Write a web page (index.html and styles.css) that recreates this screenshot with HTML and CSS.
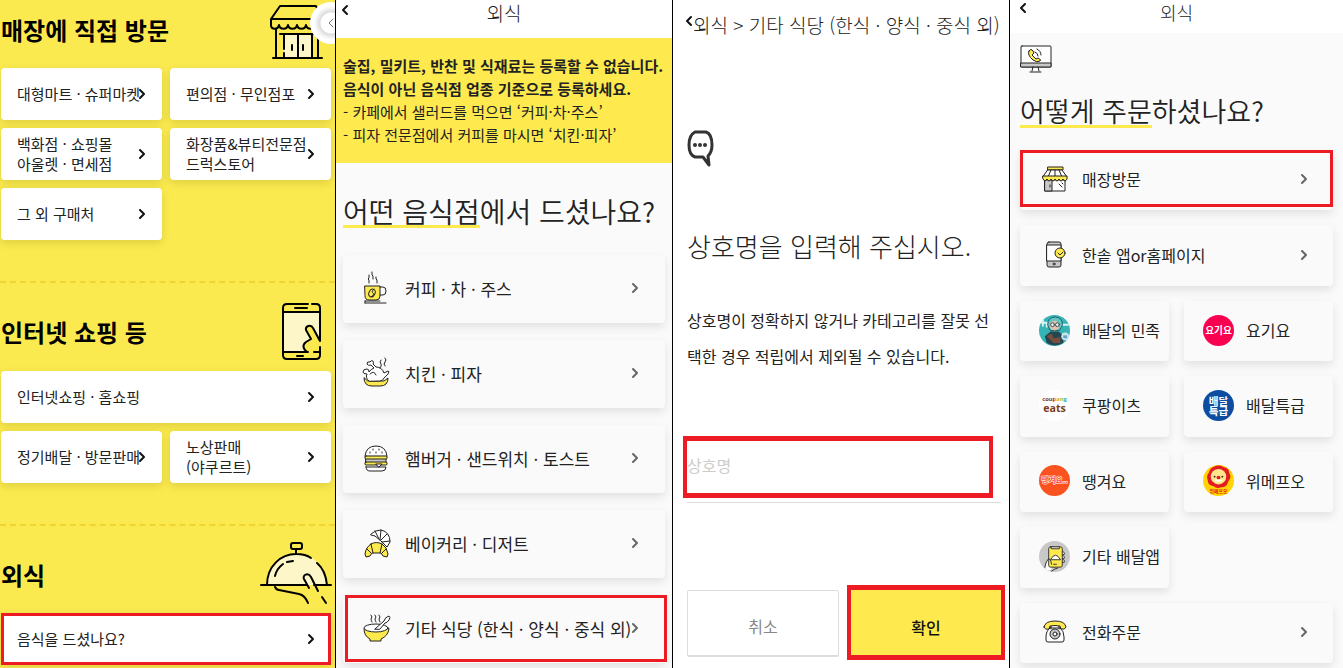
FILE: index.html
```html
<!DOCTYPE html>
<html lang="ko">
<head>
  <meta charset="UTF-8">
  <meta name="viewport" content="width=device-width, initial-scale=1.0">
  <title>외식 등록 안내</title>
  <link rel="stylesheet" href="styles.css">
</head>
<body>
  <svg class="defs" aria-hidden="true">
    <symbol id="next" viewBox="0 0 8 12"><path d="M2 2l4 4-4 4" /></symbol>
    <symbol id="prev" viewBox="0 0 8 12"><path d="M6 2L2 6l4 4" /></symbol>
    <linearGradient id="rainbow">
      <stop offset="45%" stop-color="#7b3f20" />
      <stop offset="46%" stop-color="#e33b2e" />
      <stop offset="60%" stop-color="#f3a61c" />
      <stop offset="78%" stop-color="#8cc63f" />
      <stop offset="90%" stop-color="#27a9e1" />
    </linearGradient>
  </svg>
  <main class="screens">

    <!-- 1. category -->
    <section class="screen category">
      <div class="group">
        <div class="group-head">
          <h2>매장에 직접 방문</h2>
          <svg class="group-icon" viewBox="0 0 70 60">
            <path class="cream" d="M23 34h28v24H23z" />
            <path d="M10 19L19 6h36l5 13M10 19h50M10 19v6c0 5 7 5 8 0 1 5 8 5 9 0 1 5 8 5 9 0 1 5 8 5 9 0 1 5 8 5 9 0M15 30v28M57 30v28M12 58h49M19 34h36M23 34v15M23 53v5M37 34v24M51 34v24M31 45v5M42 45v5" />
          </svg>
        </div>
        <div class="tiles">
          <a href="#" class="tile"><span>대형마트 · 슈퍼마켓</span><svg class="arrow"><use href="#next" /></svg></a>
          <a href="#" class="tile"><span>편의점 · 무인점포</span><svg class="arrow"><use href="#next" /></svg></a>
          <a href="#" class="tile"><span>백화점 · 쇼핑몰<br>아울렛 · 면세점</span><svg class="arrow"><use href="#next" /></svg></a>
          <a href="#" class="tile"><span>화장품&amp;뷰티전문점<br>드럭스토어</span><svg class="arrow"><use href="#next" /></svg></a>
          <a href="#" class="tile"><span>그 외 구매처</span><svg class="arrow"><use href="#next" /></svg></a>
        </div>
      </div>
      <div class="group">
        <div class="group-head">
          <h2>인터넷 쇼핑 등</h2>
          <svg class="group-icon" viewBox="0 0 70 60">
            <path class="cream" d="M22 10h37v29l-7-13c-2-4-8-2-7 2l5 9c-6 2-9 8-4 13H22z" />
            <path d="M47 2H26q-4 0-4 4v47q0 4 4 4h29q4 0 4-4v-8M51 2h4q4 0 4 4v33l-7-13c-2-4-8-2-7 2l5 9-5 3c-4 3-3 7 1 10M22 10h37M22 50h25M53 50h6M34 6h12M36 54h6" />
          </svg>
        </div>
        <div class="tiles">
          <a href="#" class="tile wide"><span>인터넷쇼핑 · 홈쇼핑</span><svg class="arrow"><use href="#next" /></svg></a>
          <a href="#" class="tile"><span>정기배달 · 방문판매</span><svg class="arrow"><use href="#next" /></svg></a>
          <a href="#" class="tile"><span>노상판매<br>(야쿠르트)</span><svg class="arrow"><use href="#next" /></svg></a>
        </div>
      </div>
      <div class="group">
        <div class="group-head">
          <h2>외식</h2>
          <svg class="group-icon" viewBox="0 0 70 60">
            <path class="cream" d="M6 40a30 31 0 0 1 60 0z" />
            <path d="M6 40c0-19 14-31 29-31 6 0 11 1 15 4M56 18c6 5 9 12 10 22M0 40h45M53 40h17M35 4v5M14 31c1-5 4-9 8-12M26 17l6-1M14 42c1 2 2 3 4 3l20 4c5 1 7 4 9 9M48 43l-5-9c-2-4 4-7 7-2l7 14M61 52l4 6" />
            <rect x="30" y="-2" width="11" height="6" rx="2" />
          </svg>
        </div>
        <div class="tiles">
          <a href="#" class="tile wide marked"><span>음식을 드셨나요?</span><svg class="arrow"><use href="#next" /></svg></a>
        </div>
      </div>
      <button class="drawer" aria-label="메뉴 열기"><svg class="arrow"><use href="#prev" /></svg></button>
    </section>

    <!-- 2. restaurant type -->
    <section class="screen restaurant">
      <header class="bar">
        <button class="back" aria-label="뒤로"><svg class="arrow"><use href="#prev" /></svg></button>
        <h1>외식</h1>
      </header>
      <div class="notice">
        <strong>술집, 밀키트, 반찬 및 식재료는 등록할 수 없습니다.</strong><br>
        <strong>음식이 아닌 음식점 업종 기준으로 등록하세요.</strong><br>
        - 카페에서 샐러드를 먹으면 ‘커피·차·주스’<br>
        - 피자 전문점에서 커피를 마시면 ‘치킨·피자’
      </div>
      <h2 class="question"><span>어떤 음식점</span>에서 드셨나요?</h2>
      <nav class="list">
        <a href="#" class="card">
          <svg class="icon" viewBox="0 0 34 36">
            <path class="yellow" d="M6 16h15v10q0 4-4 4h-7q-4 0-4-4z" />
            <path d="M21 17h3q3 0 3 4t-3 4h-3M6 31h15M6 33h21M6 31v2M10 5v3l-1 1 1 1v3M13 2v3l1 1v3M17 7v2l1 1v3" />
            <ellipse cx="13" cy="23" rx="3" ry="4" transform="rotate(25 13 23)" /><path d="M15 19q-3 3-1 4t-2 4" />
          </svg>
          <span>커피 · 차 · 주스</span><svg class="arrow"><use href="#next" /></svg>
        </a>
        <a href="#" class="card">
          <svg class="icon" viewBox="0 0 34 36">
            <path class="yellow" d="M5 23q0 8 8 8h8q8 0 8-8l-4 3H9z" />
            <path class="white" d="M10 26q-4-3-2-7-4 0-4-2 0-3 4-3 2 0 2 3 2-3 5-4l-3-3q-3 1-4-1 0-3 3-2 1-2 3-1 1 2 0 3l3 3q6 0 8 6l4-2q2 0 0 3l-4 4q-1 3-4 3z" />
            <path d="M11 19q4-4 6 1M22 5q-2 2 0 4 1 2-1 4M26 3q2 2 0 4-2 2 0 4" />
          </svg>
          <span>치킨 · 피자</span><svg class="arrow"><use href="#next" /></svg>
        </a>
        <a href="#" class="card">
          <svg class="icon" viewBox="0 0 34 36">
            <path class="white" d="M6 16Q7 6 17 6t11 10z" />
            <path d="M11 12v1M14 9v1M17 12v1M20 9v1M23 12v1" />
            <rect class="grey" x="7" y="18" width="20" height="5" />
            <rect class="yellow" x="6" y="16" width="22" height="3" rx="1" /><rect class="yellow" x="6" y="22" width="22" height="3" rx="1" />
            <path class="white" d="M7 27h20q0 4-4 4H11q-4 0-4-4zM17 24h6l-3 3z" />
          </svg>
          <span>햄버거 · 샌드위치 · 토스트</span><svg class="arrow"><use href="#next" /></svg>
        </a>
        <a href="#" class="card">
          <svg class="icon" viewBox="0 0 34 36">
            <path class="white" d="M12 9q4-4 10-4 9 2 9 12l-3 5-6-6-6-5-4-1zM16 6l4 8M22 5l-1 10M28 9l-6 6M31 16l-8 1" />
            <path class="yellow" d="M12 19q5-3 11 0 5 3 6 10l-1 3-4-1-2-3h-9l-2 3-4 1-1-3q1-7 6-10zM12 19l2 9M23 19l-2 9M8 24l4 4M27 24l-4 4" />
          </svg>
          <span>베이커리 · 디저트</span><svg class="arrow"><use href="#next" /></svg>
        </a>
        <a href="#" class="card marked">
          <svg class="icon" viewBox="0 0 34 36">
            <path class="yellow" d="M5 19q0 7 6 10v2h11v-2q7-3 8-10z" />
            <ellipse class="white" cx="17" cy="18" rx="12" ry="4" />
            <path class="white" d="M16 19l9-8q1-4 5-5 2 1 0 4-2 3-4 3l-5 6z" />
            <path d="M12 5q2 2 0 4 0 1 1 3M16 5q2 2 0 4 0 1 1 3M20 5q2 2 0 4 0 1 1 3" />
          </svg>
          <span>기타 식당 (한식 · 양식 · 중식 외)</span><svg class="arrow"><use href="#next" /></svg>
        </a>
      </nav>
    </section>

    <!-- 3. store name -->
    <section class="screen name">
      <header class="path">
        <button class="back" aria-label="뒤로"><svg class="arrow"><use href="#prev" /></svg></button>
        <h1>외식 &gt; 기타 식당 (한식 · 양식 · 중식 외)</h1>
      </header>
      <svg class="bubble" viewBox="0 0 27 38">
        <path d="M8 2h11q6 2 6 13 0 7-4 11l1 9-6-8H8q-6-2-6-12T8 2z" />
        <circle cx="8" cy="15" r="2" /><circle cx="13" cy="15" r="2" /><circle cx="18" cy="15" r="2" />
      </svg>
      <form>
        <label for="storeName">상호명을 입력해 주십시오.</label>
        <p>상호명이 정확하지 않거나 카테고리를 잘못 선<br>택한 경우 적립에서 제외될 수 있습니다.</p>
        <div class="field"><input type="text" id="storeName" placeholder="상호명"></div>
        <div class="actions">
          <button type="button" class="cancel">취소</button>
          <button type="button" class="confirm">확인</button>
        </div>
      </form>
    </section>

    <!-- 4. order method -->
    <section class="screen order">
      <header class="bar">
        <button class="back" aria-label="뒤로"><svg class="arrow"><use href="#prev" /></svg></button>
        <h1>외식</h1>
      </header>
      <svg class="monitor" viewBox="0 0 32 28">
        <rect class="white" x="1" y="1" width="30" height="21" rx="1" />
        <path class="grey" d="M1 18h30v4H1z" />
        <path d="M13 22l-1 4M18 22l1 4M10 27h11" />
        <path class="yellow" d="M9 6q2-3 4 0l1 2-2 2 4 4 2-1q4 2 2 3-3 2-7-1-6-5-4-9z" />
        <path d="M15 7q3 1 3 4M17 4q4 2 4 6" />
      </svg>
      <h2 class="question"><span>어떻게 주문</span>하셨나요?</h2>
      <nav class="methods">
        <a href="#" class="card wide marked">
          <svg class="icon" viewBox="0 0 31 31">
            <path class="white" d="M6 16h20v11H6z" /><path class="grey" d="M6 16h7v11H6z" />
            <path class="yellow" d="M9 3h15v3H9z" />
            <path class="white" d="M9 6h14l5 7H4zM12 6l-3 7M16 6v7M20 6l3 7" />
            <path class="yellow" d="M4 12h24v3q-2 4-4 0-2 4-4 0-2 4-4 0-2 4-4 0-2 4-4 0-2 4-4 0z" />
            <path d="M11 21v2M20 20l3 3M23 19l1 1" />
          </svg>
          <span>매장방문</span><svg class="arrow"><use href="#next" /></svg>
        </a>
        <a href="#" class="card wide">
          <svg class="icon" viewBox="0 0 31 31">
            <rect class="grey" x="8" y="3" width="14" height="25" rx="2" />
            <path class="white" d="M8 6h14v16H8z" />
            <circle class="white" cx="15" cy="25" r="1" />
            <circle class="yellow" cx="21" cy="14" r="5" /><path d="M19 14l2 2 3-3" />
          </svg>
          <span>한솥 앱or홈페이지</span><svg class="arrow"><use href="#next" /></svg>
        </a>
        <a href="#" class="card">
          <svg class="logo" viewBox="0 0 32 32">
            <circle cx="16" cy="16" r="16" fill="#36b3b5" />
            <path d="M3 8h5v4M24 10h6M4 5v6" stroke="#d9f4f2" stroke-width="2" fill="none" />
            <path d="M9 10q0-8 8-8 8 1 7 9l-3 5h-9z" fill="#60c6c4" stroke="#245c68" />
            <circle cx="16" cy="11" r="5" fill="#dfc4ad" />
            <circle cx="14" cy="10" r="2" fill="#eeeeee" stroke="#34464c" /><circle cx="19" cy="10" r="2" fill="#eeeeee" stroke="#34464c" />
            <path d="M6 22l6-5h8l5 4v8q-9 5-17 0z" fill="#26464f" /><path d="M8 22l5-3 2 5 7-1v6h-7z" fill="#7a4e3e" />
            <circle cx="27" cy="22" r="4" fill="#c7e7ee" /><path d="M25 21h4v3h-4z" fill="#6a9fc5" />
          </svg>
          <span>배달의 민족</span>
        </a>
        <a href="#" class="card">
          <svg class="logo" viewBox="0 0 32 32"><circle cx="16" cy="16" r="16" fill="#fa0050" /><text x="16" y="20" font-size="10" fill="#fff">요기요</text></svg>
          <span>요기요</span>
        </a>
        <a href="#" class="card">
          <svg class="logo latin" viewBox="0 0 32 32">
            <circle cx="16" cy="16" r="16" fill="#fff" />
            <text x="16" y="11" font-size="6" fill="url(#rainbow)">coupang</text>
            <text x="16" y="23" font-size="11" fill="#7b3f20">eats</text>
          </svg>
          <span>쿠팡이츠</span>
        </a>
        <a href="#" class="card">
          <svg class="logo" viewBox="0 0 32 32"><circle cx="16" cy="16" r="16" fill="#0c4da2" /><text x="16" y="15" font-size="11" fill="#fff">배달</text><text x="16" y="26" font-size="11" fill="#fff">특급</text></svg>
          <span>배달특급</span>
        </a>
        <a href="#" class="card">
          <svg class="logo" viewBox="0 0 32 32"><circle cx="16" cy="16" r="16" fill="#fb521f" /><text class="hollow" x="16" y="19" font-size="8">땡겨요..</text></svg>
          <span>땡겨요</span>
        </a>
        <a href="#" class="card">
          <svg class="logo" viewBox="0 0 32 32">
            <circle cx="16" cy="16" r="16" fill="#ffd400" />
            <path d="M11 2q5-3 10 0 6 1 6 6 3 5-1 9-1 6-7 6-5 2-8-1-6-1-6-6-2-5 1-8 1-5 5-6z" fill="#e41b22" />
            <circle cx="16" cy="12" r="8" fill="#ffe68a" />
            <circle cx="12" cy="12" r="1" fill="#333" /><circle cx="20" cy="12" r="1" fill="#333" />
            <circle cx="16" cy="13" r="2" fill="#e41b22" /><path d="M13 16h6" stroke="#fff" stroke-width="2" />
            <text x="16" y="29" font-size="5" fill="#e41b22">위메프오</text>
          </svg>
          <span>위메프오</span>
        </a>
        <a href="#" class="card">
          <svg class="logo" viewBox="0 0 32 32">
            <circle cx="16" cy="16" r="16" fill="#c8c8c8" />
            <path d="M7 29q-1-5 3-11l3 2v9q-3 3-6 0z" fill="#fff" />
            <path d="M24 11q3 0 2 3h-2M24 15q3 0 2 3h-2M24 19q3 0 2 3h-2" fill="#fff" stroke="#333" />
            <rect x="10" y="6" width="14" height="21" rx="2" fill="#feea4f" stroke="#333" />
            <path d="M13 6h8v2h-8zM12 19q5-9 10 0zM15 24h3" fill="#fff" stroke="#333" />
            <path d="M6 27q1-6 4-9 3 2 3 6M13 31q4-3 6-3" fill="none" stroke="#333" />
          </svg>
          <span>기타 배달앱</span>
        </a>
        <a href="#" class="card wide">
          <svg class="icon" viewBox="0 0 31 31">
            <path class="white" d="M11 12h10q4 3 4 9v3q0 2-2 2H9q-2 0-2-2v-3q0-6 4-9zM12 10v3M20 10v3" />
            <path class="yellow" d="M5 11q1-6 11-6t11 6q-1 3-5 2l-1-3q-5-1-10 0l-1 3q-4 1-5-2z" />
            <circle class="grey" cx="16" cy="18" r="5" /><circle class="white" cx="16" cy="18" r="2" />
          </svg>
          <span>전화주문</span><svg class="arrow"><use href="#next" /></svg>
        </a>
      </nav>
    </section>
  </main>
</body>
</html>
```

FILE: styles.css
```css
* {
  box-sizing: border-box;
}
body {
  margin: 0;
  font-family: "Noto Sans CJK KR", sans-serif;
  color: #222222;
  background-color: #ffffff;
}
h1, h2, p {
  margin: 0;
}
a {
  color: inherit;
  text-decoration: none;
}
button {
  padding: 0;
  border: none;
  background: none;
  font-family: inherit;
  cursor: pointer;
}
svg {
  fill: none;
  stroke: #222222;
  stroke-linecap: round;
  stroke-linejoin: round;
  flex-shrink: 0;
}
.defs {
  position: absolute;
  width: 0;
  height: 0;
}
.arrow {
  display: block;
  width: 8px;
  height: 12px;
  stroke: #111111;
  stroke-width: 2;
}
.yellow {
  fill: #feea4f;
}
.white {
  fill: #ffffff;
}
.grey {
  fill: #c8c8c8;
}
.cream {
  fill: #fdf6c8;
  stroke: none;
}
.screens {
  display: grid;
  grid-template-columns: 336fr 337fr 337fr 333fr;
  min-height: 100vh;
}
.screen {
  position: relative;
  display: flex;
  flex-direction: column;
  min-width: 0;
  overflow: hidden;
  border-right: 1px solid #000000;
}
.screen:last-child {
  border-right: none;
}

/* cards */
.tile, .card {
  position: relative;
  display: flex;
  align-items: center;
  min-width: 0;
  white-space: nowrap;
  border-radius: 4px;
}
.tile span, .card span {
  flex: 1;
  min-width: 0;
}
.marked::after {
  content: "";
  position: absolute;
  inset: 0;
  border: 3px solid #ed1c24;
}

/* category */
.category {
  background-color: #faea4f;
}
.group {
  padding: 19px 4px 41px 1px;
  border-top: 2px dashed #f0d531;
}
.group:first-child {
  padding-top: 0;
  border-top: none;
}
.group:nth-child(3) {
  padding-bottom: 0;
}
.group-head {
  display: flex;
  align-items: center;
  justify-content: space-between;
  height: 60px;
  margin-bottom: 8px;
}
.group:nth-child(2) .group-head {
  margin-bottom: 9px;
}
.group-head h2 {
  font-size: 24px;
  line-height: 36px;
  color: #000000;
}
.group-icon {
  width: 70px;
  height: 60px;
  overflow: visible;
  stroke: #000000;
  stroke-width: 2;
}
.tiles {
  display: grid;
  grid-template-columns: repeat(2, minmax(0, 1fr));
  gap: 8px;
}
.wide {
  grid-column: 1 / -1;
}
.tile {
  height: 52px;
  padding: 0 16px;
  font-size: 15px;
  line-height: 20px;
  background-color: #ffffff;
  box-shadow: 0 3px 8px rgba(120, 100, 0, 0.2);
}
.drawer {
  position: absolute;
  top: 2px;
  right: -17px;
  width: 42px;
  height: 42px;
  padding-left: 17px;
  border-radius: 50%;
  background: radial-gradient(circle, #ffffff 10px, #dcdcdc 11px, #ffffff 17px);
}
.drawer .arrow {
  stroke: #777777;
  stroke-width: 1;
}

/* top bars */
.bar {
  display: grid;
  grid-template-columns: 1fr auto 1fr;
  align-items: start;
  height: 38px;
  padding: 0 5px;
  background-color: #ffffff;
}
.back {
  justify-self: start;
  padding-top: 4px;
}
.bar h1 {
  font-size: 19px;
  line-height: 26px;
  font-weight: 300;
}
.order .bar {
  height: 33px;
  padding: 0 9px;
}
.order .back {
  padding-top: 2px;
}
.order .bar h1 {
  font-size: 18px;
  line-height: 24px;
}
.question {
  font-size: 28px;
  line-height: 32px;
  font-weight: 350;
  white-space: nowrap;
}
.question span {
  display: inline-block;
  line-height: 28px;
  border-bottom: 3px solid #feea4f;
}
.card {
  background-color: #fafafa;
  box-shadow: 0 4px 10px rgba(0, 0, 0, 0.1);
}
.card .arrow {
  stroke: #666666;
}

/* restaurant */
.restaurant, .order {
  background-color: #fafafa;
}
.notice {
  padding: 16px 7px 17px;
  font-size: 15px;
  line-height: 23px;
  white-space: nowrap;
  background-color: #feea4f;
}
.restaurant .question {
  margin: 32px 7px 27px;
}
.list {
  display: grid;
  grid-template-columns: minmax(0, 1fr);
  gap: 17px;
  padding: 0 7px;
}
.list .card {
  height: 68px;
  padding: 0 26px 2px 16px;
  gap: 12px;
  font-size: 17px;
}
.list .icon {
  width: 34px;
  height: 36px;
}
.list .marked::after {
  inset: 0 -2px 1px 2px;
}

/* store name */
.name {
  padding: 10px 4px 8px 14px;
}
.path {
  display: flex;
  align-items: flex-start;
}
.path .back {
  padding-top: 5px;
  margin-left: -2px;
}
.path h1 {
  font-size: 19px;
  line-height: 30px;
  font-weight: 300;
  white-space: nowrap;
}
.bubble {
  width: 27px;
  height: 38px;
  margin-top: 90px;
  stroke: #333333;
  stroke-width: 3;
}
.bubble circle {
  fill: #333333;
  stroke: none;
}
.name label {
  display: block;
  margin: 58px 0 36px;
  font-size: 26px;
  line-height: 40px;
  font-weight: 300;
}
.name p {
  font-size: 16px;
  line-height: 36px;
}
.field {
  margin: 62px 4px 82px 0;
  padding-bottom: 4px;
  border-bottom: 1px solid #dddddd;
}
.field input {
  display: block;
  width: calc(100% - 4px);
  height: 62px;
  margin-left: -4px;
  padding: 0 0 4px;
  border: 5px solid #ed1c24;
  border-width: 5px 4px;
  font-family: inherit;
  font-size: 16px;
  outline: none;
}
.field input::placeholder {
  color: #cccccc;
}
.actions {
  display: grid;
  grid-template-columns: 152fr 158fr;
  gap: 8px;
}
.actions button {
  font-size: 16px;
}
.cancel {
  margin: 5px 0 3px;
  border: 1px solid #dddddd;
  border-bottom-width: 2px;
  border-radius: 2px;
  color: #888888;
}
.actions .confirm {
  height: 75px;
  padding-top: 8px;
  border: 5px solid #ed1c24;
  border-width: 5px 4px;
  font-weight: 500;
  color: #111111;
  background-color: #feea4f;
}
.actions .cancel {
  padding-top: 6px;
}

/* order */
.monitor {
  width: 32px;
  height: 28px;
  margin: 12px 10px 0;
}
.order .question {
  margin: 22px 10px 22px;
  font-size: 27px;
}
.methods {
  flex: 1;
  display: grid;
  grid-template-columns: repeat(2, minmax(0, 1fr));
  grid-auto-rows: minmax(56px, 1fr);
  gap: 15px;
  padding: 0 10px 5px;
}
.methods .card {
  padding: 0 0 2px 19px;
  gap: 12px;
  font-size: 16px;
}
.methods .wide {
  padding-right: 25px;
}
.methods .icon, .methods .logo {
  width: 31px;
  height: 31px;
}
.methods .marked::after {
  inset: 0 0 3px;
}
.logo {
  stroke: none;
}
.logo text {
  text-anchor: middle;
  font-weight: 700;
}
.latin {
  font-family: "Open Sans", sans-serif;
}
.hollow {
  fill: #fb521f;
  stroke: #ffffff;
  stroke-width: 1;
  paint-order: stroke;
}
```
